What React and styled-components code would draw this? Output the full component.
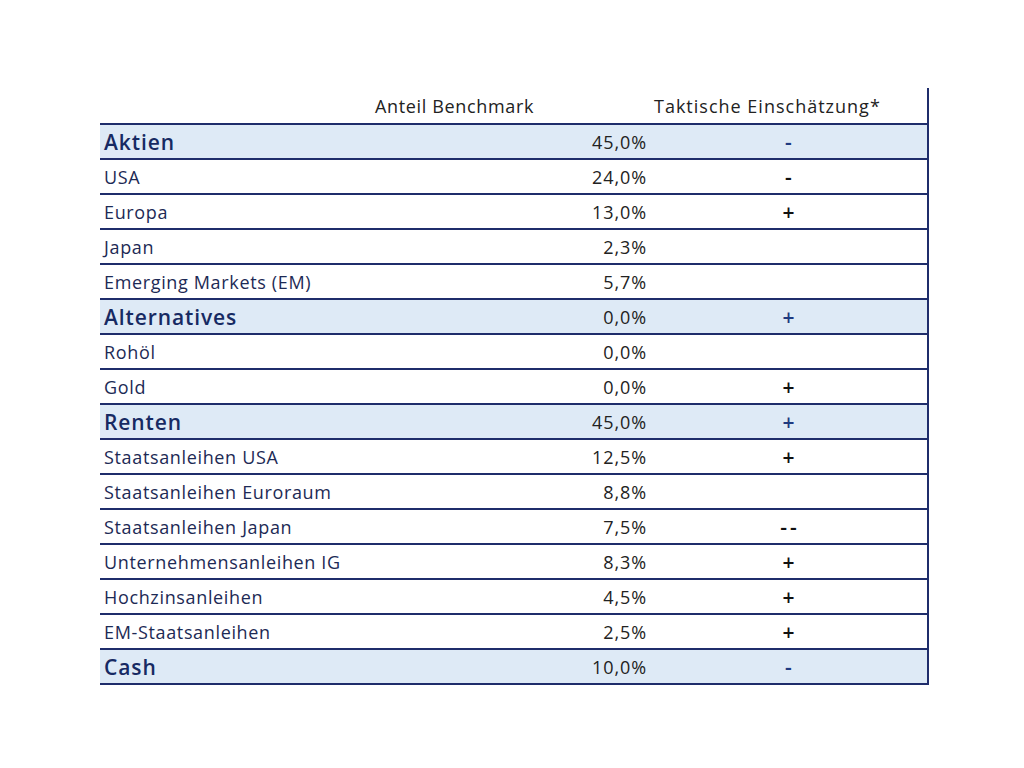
import React from 'react'
import styled, { createGlobalStyle } from 'styled-components'

const Global = createGlobalStyle`
  html, body { margin: 0; padding: 0; background: #fff; }
  body { font-family: "Open Sans", "Liberation Sans", sans-serif; }
`

const Page = styled.div`
  width: 1024px;
  height: 768px;
  padding: 88px 0 0 100px;
  box-sizing: border-box;
`

const Table = styled.div`
  width: 829px;
  border-right: 2px solid #1f2d6b;
  border-bottom: 2px solid #1f2d6b;
  box-sizing: border-box;
`

const Row = styled.div`
  display: grid;
  grid-template-columns: 270px 280px 1fr;
  align-items: center;
  height: 35px;
  box-sizing: border-box;
  border-top: ${p => (p.$head ? 'none' : '2px solid #1f2d6b')};
  background: ${p => (p.$cat ? '#deeaf6' : '#fff')};
  color: ${p => (p.$cat ? '#172a63' : '#1d2a55')};
  font-size: ${p => (p.$cat ? '21px' : '18px')};
  font-weight: ${p => (p.$cat ? 600 : 400)};
  letter-spacing: ${p => (p.$cat ? '0.9px' : '0.65px')};
`

const Label = styled.div`
  padding-left: 4px;
  white-space: nowrap;
`

const Value = styled.div`
  text-align: right;
  padding-right: 3px;
  font-size: 18px;
  font-weight: 400;
  letter-spacing: 0.9px;
  color: #222;
`

const Tactic = styled.div`
  text-align: center;
  font-size: 21px;
  font-weight: 600;
  letter-spacing: 3px;
  padding-left: 3px;
  color: ${p => (p.$cat ? '#1f3a80' : '#111')};
`

const HeadCell = styled.div`
  font-size: 18px;
  font-weight: 400;
  letter-spacing: ${p => p.$ls || '0.9px'};
  color: #222;
  padding-left: ${p => p.$pad || '4px'};
  white-space: nowrap;
`

const rows = [
  ['Aktien', '45,0%', '-', true],
  ['USA', '24,0%', '-'],
  ['Europa', '13,0%', '+'],
  ['Japan', '2,3%', ''],
  ['Emerging Markets (EM)', '5,7%', ''],
  ['Alternatives', '0,0%', '+', true],
  ['Rohöl', '0,0%', ''],
  ['Gold', '0,0%', '+'],
  ['Renten', '45,0%', '+', true],
  ['Staatsanleihen USA', '12,5%', '+'],
  ['Staatsanleihen Euroraum', '8,8%', ''],
  ['Staatsanleihen Japan', '7,5%', '--'],
  ['Unternehmensanleihen IG', '8,3%', '+'],
  ['Hochzinsanleihen', '4,5%', '+'],
  ['EM-Staatsanleihen', '2,5%', '+'],
  ['Cash', '10,0%', '-', true],
]

export default function App() {
  return (
    <Page>
      <Global />
      <Table>
        <Row $head>
          <div />
          <HeadCell $pad="5px" $ls="0.65px">Anteil Benchmark</HeadCell>
          <HeadCell $ls="1px">Taktische Einschätzung*</HeadCell>
        </Row>
        {rows.map(([label, value, tactic, cat]) => (
          <Row key={label} $cat={cat}>
            <Label>{label}</Label>
            <Value>{value}</Value>
            <Tactic $cat={cat}>{tactic}</Tactic>
          </Row>
        ))}
      </Table>
    </Page>
  )
}
